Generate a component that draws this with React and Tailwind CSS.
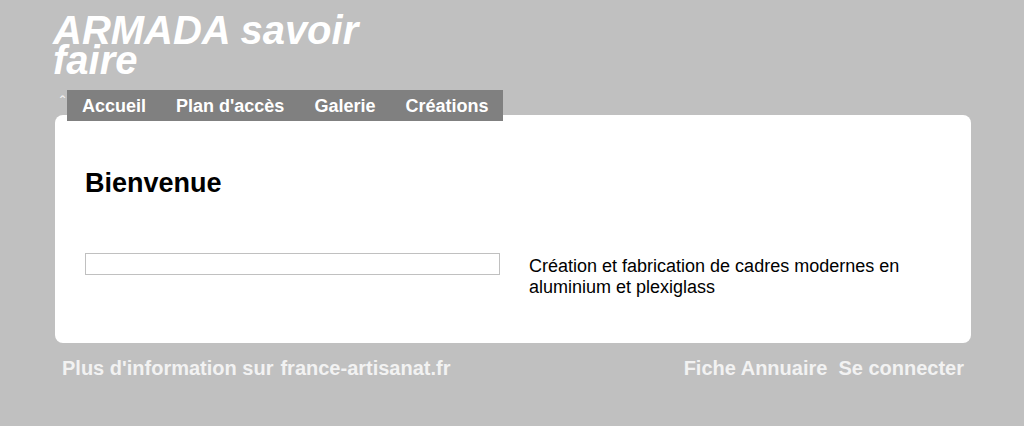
export default function App() {
  return (
    <div className="min-h-[426px] bg-[#c0c0c0] font-['Liberation_Sans',Arial,sans-serif]">
      <div className="ml-[55px] w-[916px]">
        {/* Header */}
        <div className="pt-[15px] -ml-[2px]">
          <h1 className="w-[320px] text-[40px] leading-[30px] font-bold italic text-white">
            ARMADA savoir faire
          </h1>
        </div>

        {/* Navigation */}
        <div className="relative mt-[15px] h-[25px]">
          <span className="absolute left-[5px] top-[5px] text-[16px] leading-[16px] text-[#f4f4f4]">ˆ</span>
          <nav className="absolute left-[12px] top-0 z-10 flex h-[31px] bg-[#808080] pt-[1px] text-[18px] font-bold leading-[31px] text-white">
            <a className="px-[15px]">Accueil</a>
            <a className="px-[15px]">Plan d'accès</a>
            <a className="px-[15px]">Galerie</a>
            <a className="px-[15px]">Créations</a>
          </nav>
        </div>

        {/* Content */}
        <div className="h-[228px] rounded-lg bg-white px-[30px] pt-[50px]">
          <h2 className="text-[27px] font-bold leading-[36px] text-black">Bienvenue</h2>
          <div className="mt-[52px] flex items-start">
            <div className="h-[22px] w-[415px] border border-[#c0c0c0]" />
            <p className="ml-[29px] mt-[3px] w-[390px] text-[18px] leading-[21px] text-black">
              Création et fabrication de cadres modernes en aluminium et plexiglass
            </p>
          </div>
        </div>

        {/* Footer */}
        <div className="mt-[13px] flex items-center justify-between px-[7px] text-[20px] font-bold leading-[24px] text-[#f2f2f2]">
          <div className="flex gap-[7px]">
            <span>Plus d'information sur</span>
            <a>france-artisanat.fr</a>
          </div>
          <div className="flex gap-[11px]">
            <a>Fiche Annuaire</a>
            <a>Se connecter</a>
          </div>
        </div>
      </div>
    </div>
  );
}
